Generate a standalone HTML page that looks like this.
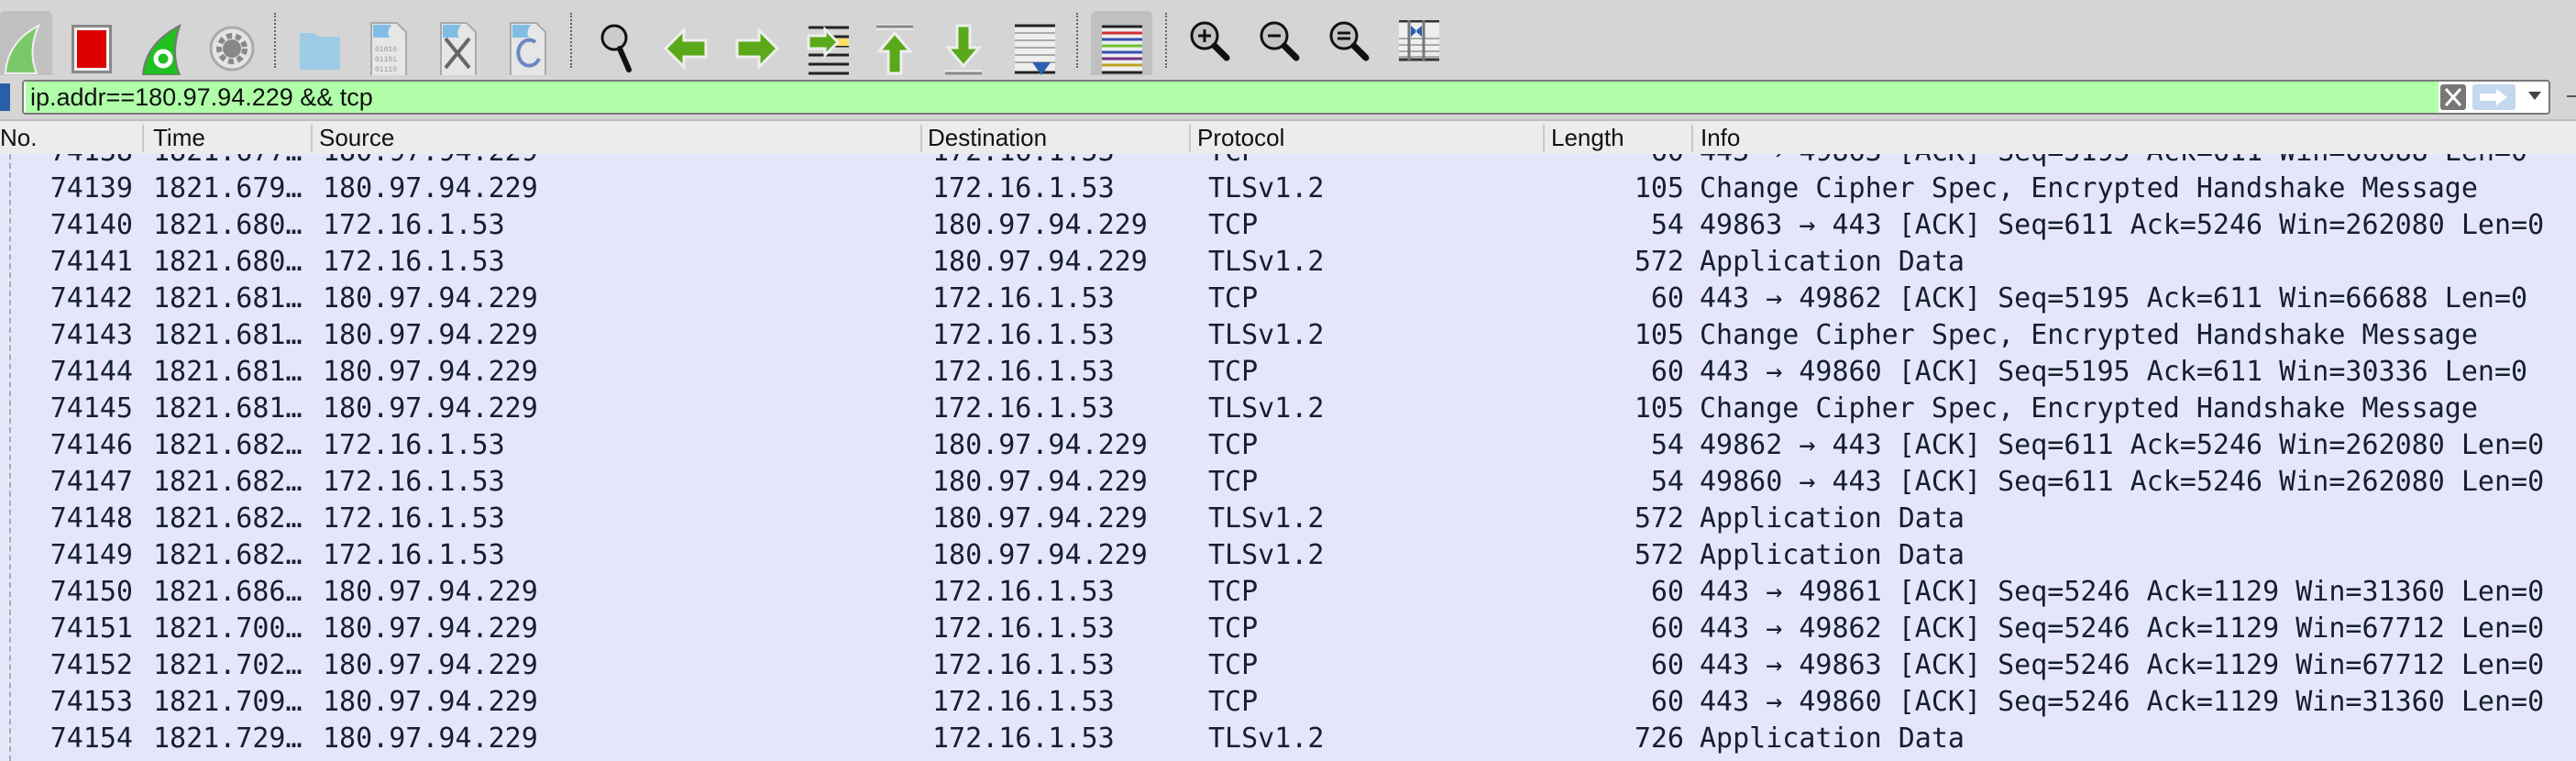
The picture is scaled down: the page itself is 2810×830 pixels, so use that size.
<!DOCTYPE html>
<html><head><meta charset="utf-8"><style>
*{margin:0;padding:0;box-sizing:border-box}
body{width:2810px;height:830px;overflow:hidden;background:#e6e6fa;position:relative;font-family:"Liberation Sans",sans-serif}
.tb{position:absolute;left:0;top:0;width:2810px;height:82px;background:#d5d5d5}
.ic{position:absolute}
.sep{position:absolute;top:14px;height:60px;border-left:2px dotted #666}
.fb{position:absolute;left:0;top:82px;width:2810px;height:48px;background:#d5d5d5}
.fin{position:absolute;left:24px;top:87px;width:2758px;height:38px;background:#fff;border:2px solid #7a7a7a;border-radius:4px}
.fg{position:absolute;left:28px;top:89px;width:2632px;height:34px;background:#b0ffa8}
.ft{position:absolute;left:33px;top:89px;line-height:34px;font-size:27px;color:#111}
.hd{position:absolute;left:0;top:130px;width:2810px;height:38px;background:#ececec;border-top:2px solid #bcbcbc}
.hd span{position:absolute;top:0;line-height:36px;font-size:26px;color:#111}
.hd i{position:absolute;top:4px;height:30px;border-left:2px solid #c8c8c8}
.rows{position:absolute;left:0;top:168px;width:2810px;height:662px;overflow:hidden}
.r{position:absolute;left:0;height:40px;width:2810px;font-family:"DejaVu Sans Mono","Liberation Mono",monospace;font-size:30px;color:#14202e;line-height:40px;white-space:pre}
.r span{position:absolute;top:0}
.no{right:2665px}
.ti{left:167px}.so{left:352px}.de{left:1017px}.pr{left:1318px}.le{right:973px}.in{left:1854px}
</style></head><body>
<div class="tb">
<div class="ic" style="left:0;top:12px;width:57px;height:84px;background:#c0c0c0;border-radius:6px"></div>
<svg class="ic" style="left:0;top:22px" width="50" height="60"><path d="M6 58 Q8 24 42 6 Q30 34 40 58 Z" fill="#7ac86a" stroke="#f0f0f0" stroke-width="2"/></svg>
<div class="ic" style="left:78px;top:27px;width:44px;height:53px;background:#f4f4f4;border:3px solid #888"><div style="position:absolute;left:3px;top:3px;right:3px;bottom:3px;background:#dd0000"></div></div>
<svg class="ic" style="left:152px;top:24px" width="48" height="60"><path d="M4 58 Q6 24 44 4 Q34 34 44 58 Z" fill="#20c020" stroke="#777" stroke-width="2"/><circle cx="26" cy="40" r="8" fill="none" stroke="#fff" stroke-width="5"/></svg>
<svg class="ic" style="left:228px;top:24px" width="50" height="58"><circle cx="25" cy="29" r="23" fill="#e4e4e4" stroke="#aaa" stroke-width="3"/><circle cx="25" cy="29" r="14" fill="none" stroke="#888" stroke-width="6" stroke-dasharray="6 4"/><circle cx="25" cy="29" r="10" fill="#888"/></svg>
<div class="sep" style="left:299px"></div>
<svg class="ic" style="left:325px;top:30px" width="48" height="50"><path d="M2 6 h16 l4 4 h24 v36 h-44 Z" fill="#9dcbe6"/></svg>
<svg class="ic" style="left:404px;top:24px" width="40" height="60"><path d="M1 1 h28 l10 10 v48 h-38 Z" fill="#e6e6e6" stroke="#aaa" stroke-width="2"/><path d="M3 3 h20 q-6 8 -2 14 h-18Z" fill="#80bde6"/><text x="5" y="32" font-size="8" fill="#999" font-family="Liberation Mono">01010</text><text x="5" y="43" font-size="8" fill="#999" font-family="Liberation Mono">01101</text><text x="5" y="54" font-size="8" fill="#999" font-family="Liberation Mono">01110</text></svg>
<svg class="ic" style="left:480px;top:24px" width="40" height="60"><path d="M1 1 h28 l10 10 v48 h-38 Z" fill="#e6e6e6" stroke="#aaa" stroke-width="2"/><path d="M3 3 h20 q-6 8 -2 14 h-18Z" fill="#80bde6"/><path d="M6 18 L32 50 M32 18 L6 50" stroke="#666" stroke-width="4"/></svg>
<svg class="ic" style="left:556px;top:24px" width="40" height="60"><path d="M1 1 h28 l10 10 v48 h-38 Z" fill="#e6e6e6" stroke="#aaa" stroke-width="2"/><path d="M3 3 h20 q-6 8 -2 14 h-18Z" fill="#80bde6"/><path d="M28 22 A12 14 0 1 0 32 40" fill="none" stroke="#6a88c0" stroke-width="4"/></svg>
<div class="sep" style="left:622px"></div>
<svg class="ic" style="left:654px;top:24px" width="40" height="58"><circle cx="16" cy="17" r="13" fill="#ccc" stroke="#111" stroke-width="3"/><path d="M22 29 L32 52" stroke="#111" stroke-width="6" stroke-linecap="round"/></svg>
<svg class="ic" style="left:724px;top:30px" width="50" height="46"><path d="M2 23 L22 3 V14 H46 V32 H22 V43 Z" fill="#5aa91a" stroke="#eee" stroke-width="3"/></svg>
<svg class="ic" style="left:800px;top:30px" width="50" height="46"><path d="M48 23 L28 3 V14 H4 V32 H28 V43 Z" fill="#5aa91a" stroke="#eee" stroke-width="3"/></svg>
<svg class="ic" style="left:880px;top:26px" width="48" height="58"><g stroke="#222" stroke-width="3"><path d="M2 4h44M2 14h44M2 24h44M2 34h44M2 44h44M2 54h44"/></g><rect x="30" y="16" width="16" height="8" fill="#ffe060"/><path d="M34 20 L20 6 V13 H2 V27 H20 V34 Z" fill="#5aa91a" stroke="#eee" stroke-width="3"/></svg>
<svg class="ic" style="left:953px;top:26px" width="46" height="58"><path d="M3 3h40" stroke="#eee" stroke-width="7"/><path d="M3 3h40" stroke="#888" stroke-width="3"/><path d="M23 10 L40 30 H30 V54 H16 V30 H6 Z" fill="#5aa91a" stroke="#eee" stroke-width="3"/></svg>
<svg class="ic" style="left:1028px;top:26px" width="46" height="58"><path d="M3 54h40" stroke="#eee" stroke-width="7"/><path d="M3 54h40" stroke="#888" stroke-width="3"/><path d="M23 46 L40 26 H30 V2 H16 V26 H6 Z" fill="#5aa91a" stroke="#eee" stroke-width="3"/></svg>
<svg class="ic" style="left:1106px;top:26px" width="46" height="56"><rect x="1" y="2" width="44" height="52" fill="#eee"/><g stroke="#aaa" stroke-width="2"><path d="M1 10h44M1 18h44M1 26h44M1 34h44M1 42h44"/></g><path d="M1 2h44M1 53h44" stroke="#222" stroke-width="3"/><path d="M20 42 L40 42 L30 56Z" fill="#2a60b0"/></svg>
<div class="sep" style="left:1174px"></div>
<div class="ic" style="left:1190px;top:12px;width:67px;height:84px;background:#c0c0c0;border-radius:6px"></div>
<svg class="ic" style="left:1202px;top:26px" width="44" height="56"><rect x="0" y="2" width="44" height="52" fill="#eee"/><path d="M0 3h44M0 53h44" stroke="#222" stroke-width="3"/><g stroke-width="3"><path d="M0 10h44" stroke="#d03030"/><path d="M0 17h44" stroke="#3050b0"/><path d="M0 24h44" stroke="#70c030"/><path d="M0 31h44" stroke="#3050b0"/><path d="M0 38h44" stroke="#703080"/><path d="M0 45h44" stroke="#c0a020"/></g></svg>
<div class="sep" style="left:1271px"></div>
<svg class="ic" style="left:1298px;top:22px" width="46" height="46"><circle cx="16" cy="17" r="14" fill="#c4c4c4" stroke="#111" stroke-width="3"/><path d="M27 28 L40 41" stroke="#111" stroke-width="7" stroke-linecap="round"/><path d="M9 17h14M16 10v14" stroke="#111" stroke-width="3"/></svg>
<svg class="ic" style="left:1374px;top:22px" width="46" height="46"><circle cx="16" cy="17" r="14" fill="#c4c4c4" stroke="#111" stroke-width="3"/><path d="M27 28 L40 41" stroke="#111" stroke-width="7" stroke-linecap="round"/><path d="M9 17h14" stroke="#111" stroke-width="3"/></svg>
<svg class="ic" style="left:1450px;top:22px" width="46" height="46"><circle cx="16" cy="17" r="14" fill="#c4c4c4" stroke="#111" stroke-width="3"/><path d="M27 28 L40 41" stroke="#111" stroke-width="7" stroke-linecap="round"/><path d="M9 14h14M9 20h14" stroke="#111" stroke-width="3"/></svg>
<svg class="ic" style="left:1526px;top:22px" width="46" height="46"><rect x="0" y="0" width="44" height="44" fill="#eee"/><g stroke="#aaa" stroke-width="2"><path d="M0 20h44M0 27h44M0 34h44M0 40h44"/></g><path d="M0 1h44M0 43h44" stroke="#333" stroke-width="3"/><path d="M11 0v44M27 0v44" stroke="#777" stroke-width="3"/><path d="M13 6 L20 12 L13 18Z M25 6 L18 12 L25 18Z" fill="#2a60b0"/></svg>
</div>
<div class="fb"></div>
<div class="fin"></div>
<div class="ic" style="left:0;top:91px;width:11px;height:30px;background:#2a5fa8"></div>
<div class="fg"></div>
<div class="ft">ip.addr==180.97.94.229 &amp;&amp; tcp</div>
<div class="ic" style="left:2662px;top:92px;width:28px;height:28px;background:#777;border-radius:3px"><svg width="28" height="28"><path d="M6 5 L22 23 M22 5 L6 23" stroke="#fff" stroke-width="3"/></svg></div>
<div class="ic" style="left:2697px;top:92px;width:47px;height:28px;background:#c4d8ee;border-radius:3px"><svg width="47" height="28"><path d="M8 10h18v-5l12 9-12 9v-5h-18z" fill="#fff"/></svg></div>
<svg class="ic" style="left:2758px;top:100px" width="14" height="10"><path d="M0 0h14L7 9z" fill="#444"/></svg>
<div class="ic" style="left:2800px;top:104px;width:10px;height:2px;background:#555"></div>
<div class="hd">
<span style="left:0">No.</span><i style="left:155px"></i><span style="left:167px">Time</span><i style="left:339px"></i><span style="left:348px">Source</span><i style="left:1004px"></i><span style="left:1012px">Destination</span><i style="left:1297px"></i><span style="left:1306px">Protocol</span><i style="left:1683px"></i><span style="left:1692px">Length</span><i style="left:1845px"></i><span style="left:1855px">Info</span>
</div>
<div class="rows">
<div class="ic" style="left:10px;top:0;height:662px;border-left:2px dashed #aaa"></div>
<div class="r" style="top:-22px"><span class="no">74138</span><span class="ti">1821.677…</span><span class="so">180.97.94.229</span><span class="de">172.16.1.53</span><span class="pr">TCP</span><span class="le">60</span><span class="in">443 → 49863 [ACK] Seq=5195 Ack=611 Win=66688 Len=0</span></div>
<div class="r" style="top:18px"><span class="no">74139</span><span class="ti">1821.679…</span><span class="so">180.97.94.229</span><span class="de">172.16.1.53</span><span class="pr">TLSv1.2</span><span class="le">105</span><span class="in">Change Cipher Spec, Encrypted Handshake Message</span></div>
<div class="r" style="top:58px"><span class="no">74140</span><span class="ti">1821.680…</span><span class="so">172.16.1.53</span><span class="de">180.97.94.229</span><span class="pr">TCP</span><span class="le">54</span><span class="in">49863 → 443 [ACK] Seq=611 Ack=5246 Win=262080 Len=0</span></div>
<div class="r" style="top:98px"><span class="no">74141</span><span class="ti">1821.680…</span><span class="so">172.16.1.53</span><span class="de">180.97.94.229</span><span class="pr">TLSv1.2</span><span class="le">572</span><span class="in">Application Data</span></div>
<div class="r" style="top:138px"><span class="no">74142</span><span class="ti">1821.681…</span><span class="so">180.97.94.229</span><span class="de">172.16.1.53</span><span class="pr">TCP</span><span class="le">60</span><span class="in">443 → 49862 [ACK] Seq=5195 Ack=611 Win=66688 Len=0</span></div>
<div class="r" style="top:178px"><span class="no">74143</span><span class="ti">1821.681…</span><span class="so">180.97.94.229</span><span class="de">172.16.1.53</span><span class="pr">TLSv1.2</span><span class="le">105</span><span class="in">Change Cipher Spec, Encrypted Handshake Message</span></div>
<div class="r" style="top:218px"><span class="no">74144</span><span class="ti">1821.681…</span><span class="so">180.97.94.229</span><span class="de">172.16.1.53</span><span class="pr">TCP</span><span class="le">60</span><span class="in">443 → 49860 [ACK] Seq=5195 Ack=611 Win=30336 Len=0</span></div>
<div class="r" style="top:258px"><span class="no">74145</span><span class="ti">1821.681…</span><span class="so">180.97.94.229</span><span class="de">172.16.1.53</span><span class="pr">TLSv1.2</span><span class="le">105</span><span class="in">Change Cipher Spec, Encrypted Handshake Message</span></div>
<div class="r" style="top:298px"><span class="no">74146</span><span class="ti">1821.682…</span><span class="so">172.16.1.53</span><span class="de">180.97.94.229</span><span class="pr">TCP</span><span class="le">54</span><span class="in">49862 → 443 [ACK] Seq=611 Ack=5246 Win=262080 Len=0</span></div>
<div class="r" style="top:338px"><span class="no">74147</span><span class="ti">1821.682…</span><span class="so">172.16.1.53</span><span class="de">180.97.94.229</span><span class="pr">TCP</span><span class="le">54</span><span class="in">49860 → 443 [ACK] Seq=611 Ack=5246 Win=262080 Len=0</span></div>
<div class="r" style="top:378px"><span class="no">74148</span><span class="ti">1821.682…</span><span class="so">172.16.1.53</span><span class="de">180.97.94.229</span><span class="pr">TLSv1.2</span><span class="le">572</span><span class="in">Application Data</span></div>
<div class="r" style="top:418px"><span class="no">74149</span><span class="ti">1821.682…</span><span class="so">172.16.1.53</span><span class="de">180.97.94.229</span><span class="pr">TLSv1.2</span><span class="le">572</span><span class="in">Application Data</span></div>
<div class="r" style="top:458px"><span class="no">74150</span><span class="ti">1821.686…</span><span class="so">180.97.94.229</span><span class="de">172.16.1.53</span><span class="pr">TCP</span><span class="le">60</span><span class="in">443 → 49861 [ACK] Seq=5246 Ack=1129 Win=31360 Len=0</span></div>
<div class="r" style="top:498px"><span class="no">74151</span><span class="ti">1821.700…</span><span class="so">180.97.94.229</span><span class="de">172.16.1.53</span><span class="pr">TCP</span><span class="le">60</span><span class="in">443 → 49862 [ACK] Seq=5246 Ack=1129 Win=67712 Len=0</span></div>
<div class="r" style="top:538px"><span class="no">74152</span><span class="ti">1821.702…</span><span class="so">180.97.94.229</span><span class="de">172.16.1.53</span><span class="pr">TCP</span><span class="le">60</span><span class="in">443 → 49863 [ACK] Seq=5246 Ack=1129 Win=67712 Len=0</span></div>
<div class="r" style="top:578px"><span class="no">74153</span><span class="ti">1821.709…</span><span class="so">180.97.94.229</span><span class="de">172.16.1.53</span><span class="pr">TCP</span><span class="le">60</span><span class="in">443 → 49860 [ACK] Seq=5246 Ack=1129 Win=31360 Len=0</span></div>
<div class="r" style="top:618px"><span class="no">74154</span><span class="ti">1821.729…</span><span class="so">180.97.94.229</span><span class="de">172.16.1.53</span><span class="pr">TLSv1.2</span><span class="le">726</span><span class="in">Application Data</span></div>
</div>
</body></html>
